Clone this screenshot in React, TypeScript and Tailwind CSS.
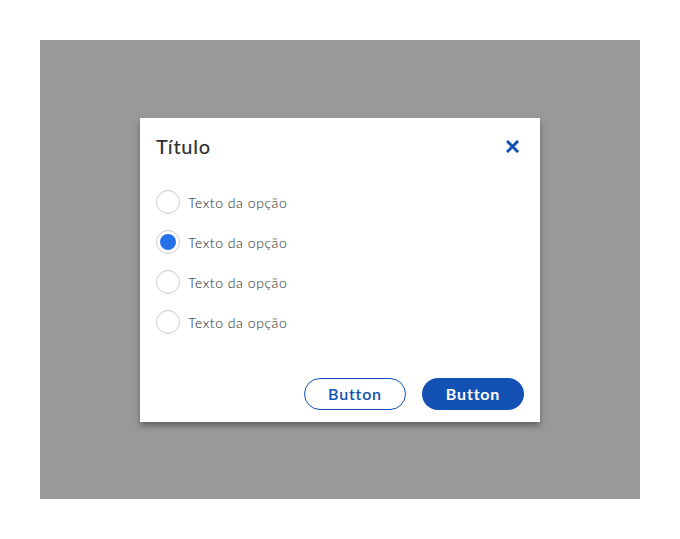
import { useState } from 'react';

const options = ['Texto da opção', 'Texto da opção', 'Texto da opção', 'Texto da opção'];

export default function App() {
  const [selected, setSelected] = useState(1);

  return (
    <div className="w-[680px] h-[539px] bg-white p-10" style={{ fontFamily: "Lato, 'Open Sans', sans-serif" }}>
      <div className="w-[600px] h-[459px] bg-[#999999] flex justify-center pt-[78px]">
        <div className="w-[400px] h-[304px] bg-white shadow-[0_4px_6px_rgba(0,0,0,0.35)] flex flex-col px-4 pt-4 pb-3">
          {/* Header */}
          <div className="flex items-center justify-between h-7 -mt-[2px]">
            <h2 className="text-[20px] leading-7 font-medium tracking-[0.7px] text-[#333333]">Título</h2>
            <button className="w-6 h-6 flex items-center justify-center" aria-label="Fechar">
              <svg width="13" height="13" viewBox="0 0 13 13" fill="none">
                <path d="M2 2L11 11M11 2L2 11" stroke="#1351b4" strokeWidth="3" strokeLinecap="square" />
              </svg>
            </button>
          </div>

          {/* Options */}
          <div className="mt-[22px] flex flex-col">
            {options.map((label, i) => (
              <label key={i} className="h-10 flex items-center gap-2 cursor-pointer" onClick={() => setSelected(i)}>
                <span className="w-6 h-6 rounded-full border border-[#cccccc] bg-white flex items-center justify-center">
                  {selected === i && <span className="w-4 h-4 rounded-full bg-[#2670e8]" />}
                </span>
                <span className="text-[14px] font-light tracking-[0.55px] text-[#222222]">{label}</span>
              </label>
            ))}
          </div>

          {/* Footer */}
          <div className="mt-auto flex justify-end gap-4">
            <button className="w-[102px] h-8 rounded-full border border-[#1351b4] text-[#1351b4] text-[16px] font-semibold tracking-[0.8px] bg-white">
              Button
            </button>
            <button className="w-[102px] h-8 rounded-full bg-[#1351b4] text-white text-[16px] font-bold tracking-[0.8px]">
              Button
            </button>
          </div>
        </div>
      </div>
    </div>
  );
}
